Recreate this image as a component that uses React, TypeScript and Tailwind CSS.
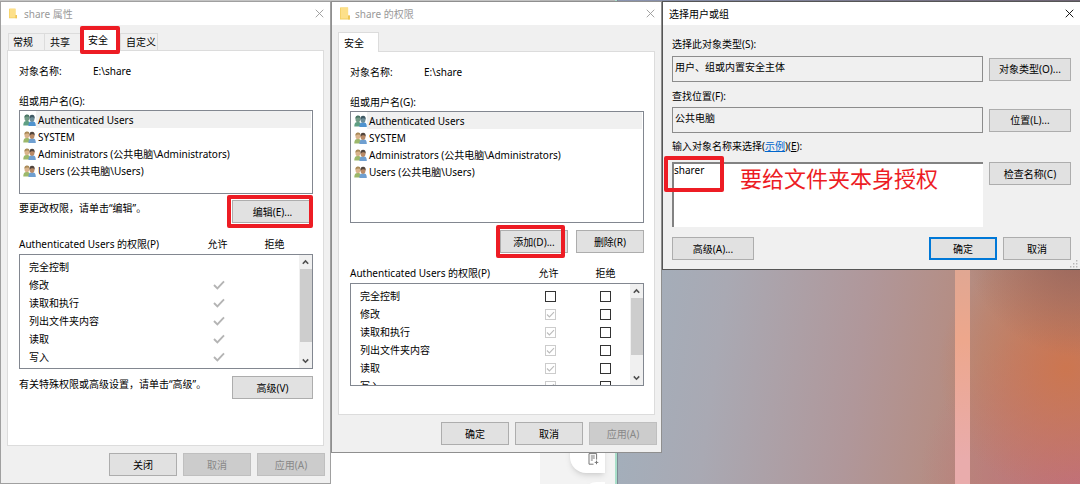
import type { ReactNode } from "react";
import clsx from "clsx";

const groups = [
  "Authenticated Users",
  "SYSTEM",
  "Administrators (公共电脑\\Administrators)",
  "Users (公共电脑\\Users)",
];

const permissions = ["完全控制", "修改", "读取和执行", "列出文件夹内容", "读取", "写入"];

function FolderIcon({ className }: { className?: string }) {
  return (
    <svg viewBox="0 0 10 13" className={className} aria-hidden="true">
      <path d="M0 0.5h8v8h1.8v4H0z" fill="#f3cf63" />
      <path d="M0.8 0.5h7.4v11H0.8z" fill="#fde08a" />
      <path d="M8.2 8.5h1.6v4H8.2z" fill="#eec252" />
    </svg>
  );
}

function CloseIcon() {
  return (
    <svg viewBox="0 0 10 10" className="size-[9px]" fill="none" stroke="currentColor" strokeWidth="1" aria-hidden="true">
      <path d="M0.8 0.8l8.4 8.4M9.2 0.8L0.8 9.2" />
    </svg>
  );
}

function UsersIcon({ green }: { green?: boolean }) {
  return (
    <svg viewBox="0 0 13 12" className="h-3 w-[13px] shrink-0" aria-hidden="true">
      <path d="M0.3 11.5c0-3.4 1-4.6 3.6-4.6s3.3 1.2 3.3 4.6z" fill={green ? "#5f9f83" : "#9cb86a"} />
      <ellipse cx="3.9" cy="4" rx="2.4" ry="3.2" fill={green ? "#729b86" : "#d9b48b"} />
      <path d="M1.5 3.8C1.2 1.4 2.4 0.5 4 0.5s2.6 0.8 2.3 2.5C4.8 2 3 2.4 1.5 3.8z" fill={green ? "#4b7665" : "#a98a58"} />
      <path d="M5.4 11.9c0-3.4 1.3-4.6 3.8-4.6s3.6 1.2 3.6 4.6z" fill={green ? "#4f93cf" : "#6f9fd0"} />
      <ellipse cx="9" cy="4.6" rx="2.5" ry="3.3" fill={green ? "#6d8d98" : "#b98a66"} />
      <path d="M6.5 4.8C6.2 2 7.2 0.8 9.1 0.8s2.9 1.2 2.4 4C10.6 3 8.6 2.8 6.5 4.8z" fill={green ? "#3f5964" : "#51453d"} />
    </svg>
  );
}

function Window({ className, children }: { className?: string; children: ReactNode }) {
  return <section className={clsx("relative flex flex-col border bg-[#f0f0f0]", className)}>{children}</section>;
}

function TitleBar({ title, icon, active }: { title: string; icon?: ReactNode; active?: boolean }) {
  return (
    <header
      className={clsx(
        "flex h-[23px] items-center bg-white px-[6px]",
        active ? "text-black" : "text-[#999]"
      )}
    >
      {icon}
      <h1>{title}</h1>
      <button type="button" aria-label="关闭窗口" className="ml-auto flex size-[10px] items-center justify-center">
        <CloseIcon />
      </button>
    </header>
  );
}

type PushButtonProps = { children: ReactNode; className?: string; disabled?: boolean; primary?: boolean };

function PushButton({ children, className, disabled, primary }: PushButtonProps) {
  return (
    <button
      type="button"
      disabled={disabled}
      className={clsx(
        "flex h-[23px] shrink-0 items-center justify-center whitespace-nowrap",
        primary ? "border-2 border-[#0078d7]" : "border",
        disabled ? "border-[#bfbfbf] bg-[#ccc] text-[#888]" : "bg-[#e1e1e1]",
        !disabled && !primary && "border-[#adadad]",
        className ?? "w-[68px]"
      )}
    >
      {children}
    </button>
  );
}

// Red outline drawn over the thing the reader should click
function Highlight({ className }: { className: string }) {
  return <span className={clsx("pointer-events-none absolute z-10 rounded-[2px] border-4 border-[#ed1c24]", className)} />;
}

function GroupList({ className }: { className: string }) {
  return (
    <ul className={clsx("border border-[#828790] bg-white px-px", className)}>
      {groups.map((name, index) => (
        <li key={name} className="flex h-[17px] items-center pl-[2px]">
          <UsersIcon green={index === 0} />
          <span className={clsx("flex h-full flex-1 items-center pl-[2px]", index === 0 && "bg-[#f0f0f0]")}>
            {name}
          </span>
        </li>
      ))}
    </ul>
  );
}

function ScrollBar({ thumb }: { thumb: string }) {
  return (
    <div className="flex w-[13px] shrink-0 flex-col items-center bg-[#f0f0f0]">
      <svg viewBox="0 0 13 14" className="h-[14px] w-[13px] shrink-0" fill="none" stroke="#505050" strokeWidth="1.6">
        <path d="M3.8 8.8L6.5 6l2.7 2.8" />
      </svg>
      <div className={clsx("w-3 bg-[#cdcdcd]", thumb)} />
      <svg viewBox="0 0 13 14" className="mt-auto h-[14px] w-[13px] shrink-0" fill="none" stroke="#505050" strokeWidth="1.6">
        <path d="M3.8 5.4L6.5 8.2l2.7-2.8" />
      </svg>
    </div>
  );
}

function PermissionBox({ label, checked }: { label: string; checked?: boolean }) {
  return (
    <span className="relative mx-auto block size-[11px]">
      <input
        type="checkbox"
        aria-label={label}
        defaultChecked={checked}
        disabled={checked}
        className={clsx("block size-[11px] appearance-none border bg-white", checked ? "border-[#ccc]" : "border-[#333]")}
      />
      {checked && (
        <svg viewBox="0 0 11 11" className="pointer-events-none absolute inset-0" fill="none" stroke="#bcbcbc" strokeWidth="1.1">
          <path d="M2 5.5l2.4 2.4L9 3.2" />
        </svg>
      )}
    </span>
  );
}

function PermissionTable({ editable }: { editable?: boolean }) {
  return (
    <table className="w-full table-fixed border-collapse">
      <tbody>
        {permissions.map((name, index) => (
          <tr key={name} className="h-[18px]">
            <th scope="row" className="p-0 pl-[9px] text-left font-normal">
              {name}
            </th>
            <td className="w-[60px] p-0">
              {editable ? (
                <PermissionBox label={`${name} 允许`} checked={index > 0} />
              ) : (
                index > 0 && (
                  <svg viewBox="0 0 12 10" className="mx-auto h-[10px] w-3" fill="none" stroke="#b4b4b4" strokeWidth="1.9">
                    <path d="M1 5l3.4 3.4L11 1.4" />
                  </svg>
                )
              )}
            </td>
            <td className="w-[50px] p-0">{editable && <PermissionBox label={`${name} 拒绝`} />}</td>
          </tr>
        ))}
      </tbody>
    </table>
  );
}

function PermissionHeader() {
  return (
    <div className="flex h-4 items-center pr-[10px]">
      <span className="flex-1">Authenticated Users 的权限(P)</span>
      <span className="w-[57px] text-center">允许</span>
      <span className="w-[57px] text-center">拒绝</span>
    </div>
  );
}

function ObjectName() {
  return (
    <div className="flex h-4 items-center">
      <span className="w-[74px]">对象名称:</span>
      <span>E:\share</span>
    </div>
  );
}

function Tab({ children, className }: { children: ReactNode; className: string }) {
  return (
    <button
      type="button"
      role="tab"
      aria-selected={false}
      className={clsx("flex h-[17px] items-center border border-b-0 border-[#dcdcdc] whitespace-nowrap", className)}
    >
      {children}
    </button>
  );
}

function PropertiesWindow() {
  return (
    <Window className="mt-px border-[#a0a0a0]">
      <TitleBar title="share 属性" icon={<FolderIcon className="mr-[7px] ml-[2px] h-[11px] w-2" />} />
      <div role="tablist" className="mt-1 flex h-[21px] items-end px-[7px]">
        <Tab className="w-[37px] pl-[4px]">常规</Tab>
        <Tab className="w-[35px] border-r-0 border-l-0 pl-[5px]">共享</Tab>
        <div className="relative h-[22px] w-[40px] self-start">
          <button type="button" role="tab" aria-selected="true" className="flex h-full w-full items-center bg-white pl-2">
            安全
          </button>
          <Highlight className="-inset-y-[3px] inset-x-0" />
        </div>
        <Tab className="w-[38px] pl-[5px]">自定义</Tab>
      </div>
      <div role="tabpanel" className="mx-[6px] flex h-[396px] flex-col border border-[#dcdcdc] bg-white pt-3 pr-[10px] pl-[11px]">
        <ObjectName />
        <div className="mt-[14px] flex h-4 items-center">组或用户名(G):</div>
        <GroupList className="mt-px h-[84px]" />
        <div className="flex h-[42px] items-start justify-between pt-[6px]">
          <p className="flex h-4 items-center">要更改权限，请单击“编辑”。</p>
          <div className="relative">
            <PushButton className="w-[81px]">编辑(E)...</PushButton>
            <Highlight className="-inset-y-[5px] right-0 -left-[5px]" />
          </div>
        </div>
        <PermissionHeader />
        <div className="mt-[2px] flex h-[115px] overflow-hidden border border-[#828790]">
          <div className="min-w-0 flex-1 pt-[3px]">
            <PermissionTable />
          </div>
          <ScrollBar thumb="h-[73px]" />
        </div>
        <div className="mt-[7px] flex items-start justify-between">
          <p className="flex h-4 items-center">有关特殊权限或高级设置，请单击“高级”。</p>
          <PushButton className="w-[81px]">高级(V)</PushButton>
        </div>
      </div>
      <footer className="flex justify-end gap-[6px] px-[5px] pt-[7px] pb-[7px]">
        <PushButton>关闭</PushButton>
        <PushButton disabled>取消</PushButton>
        <PushButton disabled>应用(A)</PushButton>
      </footer>
    </Window>
  );
}

function PermissionsWindow() {
  return (
    <Window className="mt-px border-[#8f8f8f]">
      <TitleBar title="share 的权限" icon={<FolderIcon className="mr-[5px] ml-[2px] h-[13px] w-[10px]" />} />
      <div role="tablist" className="mt-[7px] flex px-[6px]">
        <button
          type="button"
          role="tab"
          aria-selected="true"
          className="z-10 -mb-px flex h-5 w-[41px] items-center border border-b-0 border-[#dcdcdc] bg-white pl-[5px]"
        >
          安全
        </button>
      </div>
      <div role="tabpanel" className="mx-[6px] flex h-[364px] flex-col border border-[#dcdcdc] bg-white pt-3 pr-[10px] pl-[11px]">
        <ObjectName />
        <div className="mt-[14px] flex h-4 items-center">组或用户名(G):</div>
        <GroupList className="mt-px h-[112px]" />
        <div className="mt-[7px] flex justify-end gap-[8px]">
          <div className="relative">
            <PushButton>添加(D)...</PushButton>
            <Highlight className="-inset-y-[5px] right-[3px] -left-[4px]" />
          </div>
          <PushButton>删除(R)</PushButton>
        </div>
        <div className="mt-3">
          <PermissionHeader />
        </div>
        <div className="mt-[2px] flex h-[103px] overflow-hidden border border-[#828790]">
          <div className="min-w-0 flex-1 pt-[3px]">
            <PermissionTable editable />
          </div>
          <ScrollBar thumb="h-[57px]" />
        </div>
      </div>
      <footer className="flex justify-end gap-[6px] px-[4px] pt-[7px] pb-[7px]">
        <PushButton>确定</PushButton>
        <PushButton>取消</PushButton>
        <PushButton disabled>应用(A)</PushButton>
      </footer>
    </Window>
  );
}

function SelectUsersWindow() {
  return (
    <Window className="mt-px border-[#555] border-r-0">
      <TitleBar title="选择用户或组" active />
      <div className="flex flex-col px-[9px] pt-[11px]">
        <label htmlFor="object-type" className="flex h-4 items-center">
          选择此对象类型(S):
        </label>
        <div className="mt-1 flex items-center gap-[6px]">
          <input
            id="object-type"
            readOnly
            defaultValue="用户、组或内置安全主体"
            className="h-[26px] min-w-0 flex-1 border border-[#8c8c8c] bg-[#f0f0f0] px-[2px] pb-[6px]"
          />
          <PushButton className="w-[82px]">对象类型(O)...</PushButton>
        </div>
        <label htmlFor="location" className="mt-[6px] flex h-4 items-center">
          查找位置(F):
        </label>
        <div className="mt-[3px] flex items-center gap-[6px]">
          <input
            id="location"
            readOnly
            defaultValue="公共电脑"
            className="h-[26px] min-w-0 flex-1 border border-[#8c8c8c] bg-[#f0f0f0] px-[2px] pb-[6px]"
          />
          <PushButton className="w-[82px]">位置(L)...</PushButton>
        </div>
        <div className="mt-[5px] flex h-4 items-center">
          <label htmlFor="names">输入对象名称来选择</label>(
          <a href="#example" className="text-[#0066cc] underline">
            示例
          </a>
          )(<span className="underline">E</span>):
        </div>
        <div className="relative mt-2 flex items-start gap-[6px]">
          <textarea
            id="names"
            defaultValue="sharer"
            className="h-[65px] min-w-0 flex-1 resize-none border-t-2 border-l-2 border-[#828282] bg-white leading-3"
          />
          <PushButton className="w-[82px]">检查名称(C)</PushButton>
          <Highlight className="-top-[6px] -left-[8px] h-9 w-[60px]" />
          <p className="pointer-events-none absolute top-0 left-[68px] text-[22px] leading-8 whitespace-nowrap text-[#ed1c24]">
            要给文件夹本身授权
          </p>
        </div>
        <div className="flex gap-[6px] pt-[10px] pb-[9px]">
          <PushButton className="mr-auto w-[82px]">高级(A)...</PushButton>
          <PushButton primary>确定</PushButton>
          <PushButton>取消</PushButton>
        </div>
      </div>
      <svg viewBox="0 0 8 8" className="absolute right-[2px] bottom-px size-2" fill="#b8b8b8" aria-hidden="true">
        <path d="M6 0h1.4v1.4H6zM3 3h1.4v1.4H3zM6 3h1.4v1.4H6zM0 6h1.4v1.4H0zM3 6h1.4v1.4H3zM6 6h1.4v1.4H6z" />
      </svg>
    </Window>
  );
}

// What shows behind the dialogs: a browser page on the left, the wallpaper on the right
function Backdrop() {
  return (
    <div className="absolute inset-0 flex">
      <div className="flex-1 border-t border-[#c4c4c4] bg-white" />
      <div className="relative w-[75px] overflow-hidden border-t border-[#b4b4b4] bg-[#f3f3f3]">
        <div className="absolute right-[10px] bottom-[11px] flex h-10 w-[35px] items-end justify-center rounded-bl-2xl bg-white pb-2 pl-3 shadow-md">
          <svg viewBox="0 0 11 12" className="h-3 w-[11px]" fill="none" stroke="#777" strokeWidth="1" aria-hidden="true">
            <path d="M5.5 11.2H1V0.6h7.6v6M2.8 3h4M2.8 5h4M2.8 7h2M8.5 7.6v3.6M6.7 9.4h3.6" />
          </svg>
        </div>
        <div className="absolute right-[10px] -bottom-[14px] h-4 w-6 rounded-tl-2xl bg-white shadow-md" />
      </div>
      <div className="w-[3px] border-r border-[#7d8a94] bg-[#a9dfca]" />
      <div className="relative w-[462px] bg-[linear-gradient(98deg,#9fb2c0_0%,#a9a9b3_28%,#b0979a_55%,#b68a7c_78%,#b98070_100%)]">
        <div className="absolute inset-0 bg-[radial-gradient(circle_at_100%_50%,#96645a_0%,#96645a00_22%),radial-gradient(circle_at_97%_76%,#cc7650_0%,#cc765000_22%),radial-gradient(circle_at_100%_100%,#c0707c_0%,#c0707c00_24%)]" />
        <div className="absolute inset-y-0 right-[110px] w-[15px] bg-[linear-gradient(180deg,#e0a793_55%,#eda78c_70%,#e9acac_95%)]" />
        <div className="absolute inset-x-0 top-0 h-px bg-linear-to-r from-[#8a94b0] to-[#6e6473]" />
      </div>
    </div>
  );
}

export default function App() {
  return (
    <div className="relative min-h-screen overflow-hidden bg-white font-['Noto_Sans','Noto_Sans_CJK_SC',sans-serif] text-[10px] leading-4 text-black">
      <Backdrop />
      <main className="relative grid grid-cols-[331fr_331fr_418fr] items-start">
        <PropertiesWindow />
        <PermissionsWindow />
        <SelectUsersWindow />
      </main>
    </div>
  );
}
